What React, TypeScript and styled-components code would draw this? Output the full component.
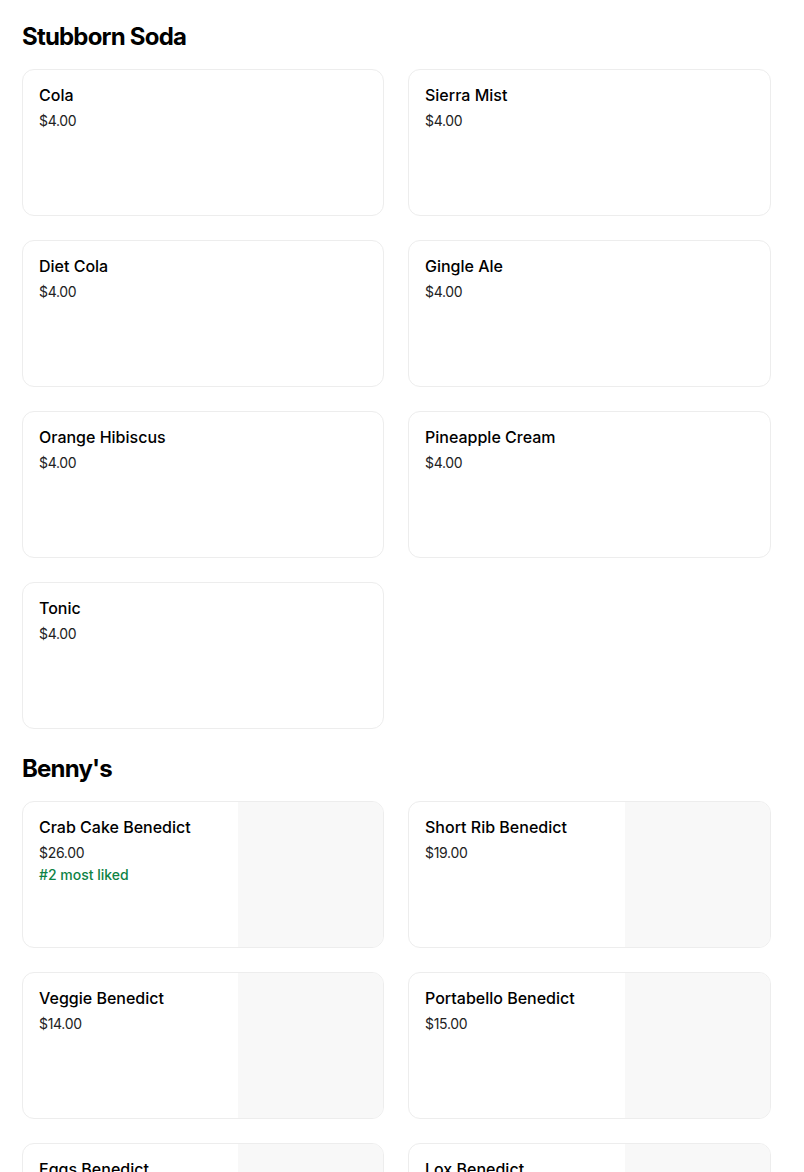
import React from 'react';
import styled, { createGlobalStyle } from 'styled-components';

type Item = {
  name: string;
  price: string;
  badge?: string;
};

type Section = {
  title: string;
  withImage?: boolean;
  items: Item[];
};

const sections: Section[] = [
  {
    title: 'Stubborn Soda',
    items: [
      { name: 'Cola', price: '$4.00' },
      { name: 'Sierra Mist', price: '$4.00' },
      { name: 'Diet Cola', price: '$4.00' },
      { name: 'Gingle Ale', price: '$4.00' },
      { name: 'Orange Hibiscus', price: '$4.00' },
      { name: 'Pineapple Cream', price: '$4.00' },
      { name: 'Tonic', price: '$4.00' },
    ],
  },
  {
    title: "Benny's",
    withImage: true,
    items: [
      { name: 'Crab Cake Benedict', price: '$26.00', badge: '#2 most liked' },
      { name: 'Short Rib Benedict', price: '$19.00' },
      { name: 'Veggie Benedict', price: '$14.00' },
      { name: 'Portabello Benedict', price: '$15.00' },
      { name: 'Eggs Benedict', price: '$13.00' },
      { name: 'Lox Benedict', price: '$18.00' },
    ],
  },
];

const App: React.FC = () => {
  return (
    <>
      <GlobalStyle />
      <Page>
        {sections.map((section) => (
          <MenuSection key={section.title}>
            <SectionTitle>{section.title}</SectionTitle>
            <Grid>
              {section.items.map((item) => (
                <Card key={item.name} $withImage={!!section.withImage}>
                  <Info>
                    <Name>{item.name}</Name>
                    <Price>{item.price}</Price>
                    {item.badge && <Badge>{item.badge}</Badge>}
                  </Info>
                  {section.withImage && <Thumb />}
                </Card>
              ))}
            </Grid>
          </MenuSection>
        ))}
      </Page>
    </>
  );
};

export default App;

const GlobalStyle = createGlobalStyle`
  body {
    margin: 0;
    background: #ffffff;
    font-family: Inter, 'Noto Sans', sans-serif;
    color: #000000;
  }
`;

const Page = styled.main`
  width: 749px;
  padding: 21px 0 0 22px;
  display: flex;
  flex-direction: column;
  gap: 24px;
`;

const MenuSection = styled.section`
  display: flex;
  flex-direction: column;
`;

const SectionTitle = styled.h2`
  margin: 0 0 16px;
  font-size: 24px;
  line-height: 32px;
  font-weight: 700;
  letter-spacing: -0.8px;
  color: #000000;
`;

const Grid = styled.div`
  display: grid;
  grid-template-columns: 362px 363px;
  column-gap: 24px;
  row-gap: 24px;
`;

const Card = styled.div<{ $withImage: boolean }>`
  display: grid;
  grid-template-columns: ${(p) => (p.$withImage ? '1fr 145px' : '1fr')};
  height: 147px;
  box-sizing: border-box;
  border: 1px solid #ededed;
  border-radius: 12px;
  overflow: hidden;
  background: #ffffff;
`;

const Info = styled.div`
  padding: 15px 16px 16px;
  display: flex;
  flex-direction: column;
`;

const Name = styled.div`
  font-size: 16px;
  line-height: 20px;
  font-weight: 500;
  color: #000000;
`;

const Price = styled.div`
  margin-top: 6px;
  font-size: 14px;
  line-height: 20px;
  letter-spacing: -0.3px;
  color: #222222;
`;

const Badge = styled.div`
  margin-top: 2px;
  font-size: 14px;
  line-height: 20px;
  font-weight: 500;
  color: #0e8345;
`;

const Thumb = styled.div`
  background: #f8f8f8;
`;
